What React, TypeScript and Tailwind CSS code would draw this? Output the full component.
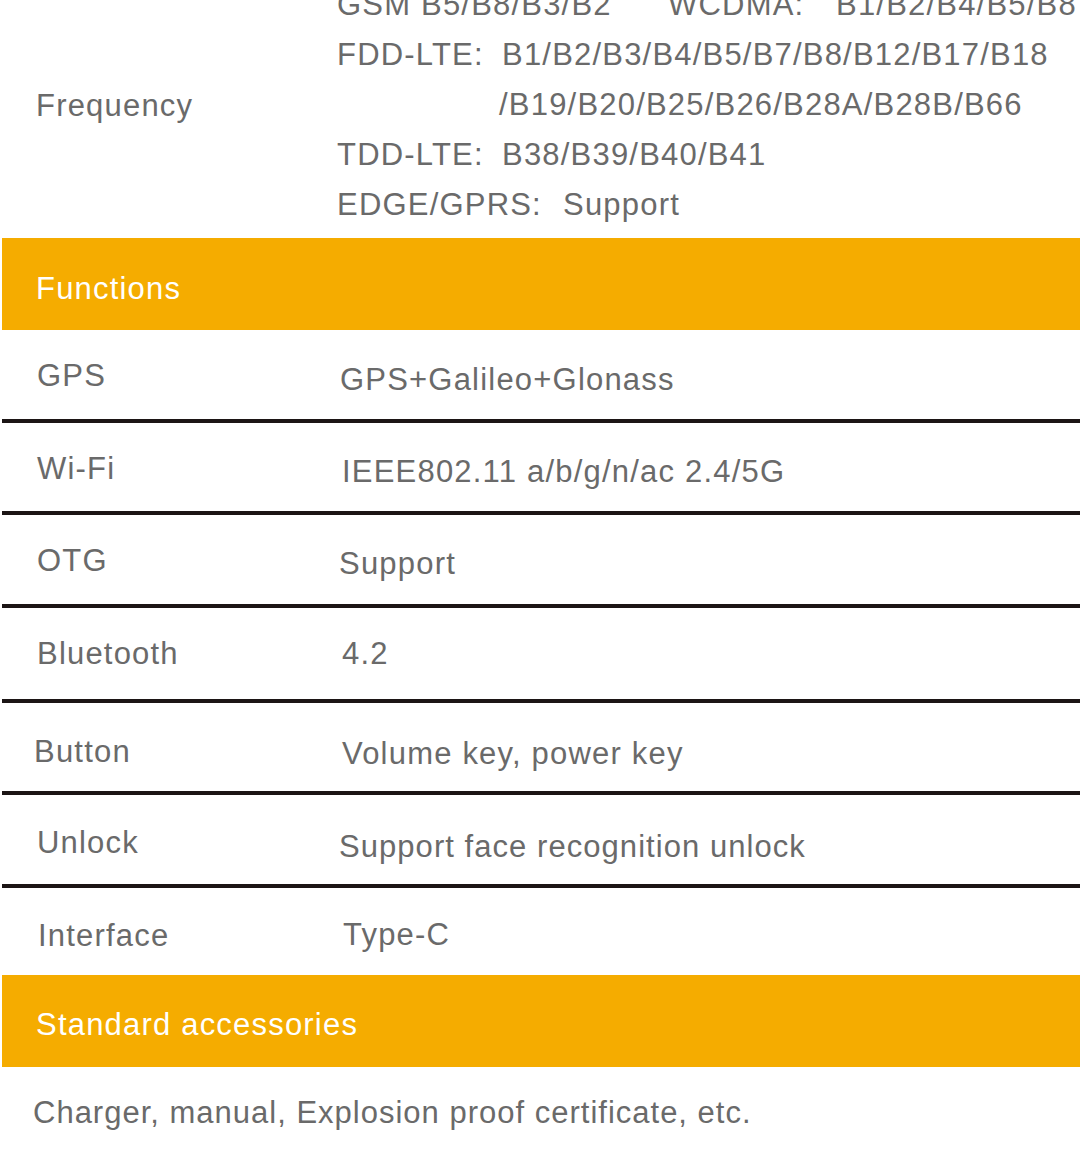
const font = { fontFamily: '"Liberation Sans", Arial, sans-serif' };

type Row = {
  label: string;
  value: string;
  h: string;
  line: boolean;
  labelCls: string;
  valueCls: string;
};

// spec rows under "Functions" (heights include the 4px rule at the bottom)
const rows: Row[] = [
  { label: "GPS", value: "GPS+Galileo+Glonass", h: "h-[93px]", line: true, labelCls: "pl-[35px] pt-[28px]", valueCls: "pl-[338px] pt-[32px]" },
  { label: "Wi-Fi", value: "IEEE802.11 a/b/g/n/ac 2.4/5G", h: "h-[92px]", line: true, labelCls: "pl-[35px] pt-[28px]", valueCls: "pl-[340px] pt-[31px]" },
  { label: "OTG", value: "Support", h: "h-[93px]", line: true, labelCls: "pl-[35px] pt-[28px]", valueCls: "pl-[337px] pt-[31px]" },
  { label: "Bluetooth", value: "4.2", h: "h-[95px]", line: true, labelCls: "pl-[35px] pt-[28px]", valueCls: "pl-[340px] pt-[28px]" },
  { label: "Button", value: "Volume key, power key", h: "h-[92px]", line: true, labelCls: "pl-[32px] pt-[31px]", valueCls: "pl-[340px] pt-[33px]" },
  { label: "Unlock", value: "Support face recognition unlock", h: "h-[93px]", line: true, labelCls: "pl-[35px] pt-[30px]", valueCls: "pl-[337px] pt-[34px] tracking-[1.05px]" },
  { label: "Interface", value: "Type-C", h: "h-[87px]", line: false, labelCls: "pl-[36px] pt-[30px]", valueCls: "pl-[341px] pt-[29px]" },
];

function SectionHeader({ title, pad }: { title: string; pad: string }) {
  return (
    <div className={`h-[92px] bg-[#f5ac00] pl-[34px] text-white ${pad}`}>
      {title}
    </div>
  );
}

export default function App() {
  return (
    <div
      className="w-[1080px] h-[1175px] overflow-hidden bg-white pl-[2px] text-[#6a6a6a] text-[31px] leading-[36px] tracking-[1.2px]"
      style={font}
    >
      {/* Frequency block, top line is cut off */}
      <div className="h-[238px] flex overflow-hidden">
        <div className="w-[335px] shrink-0 pl-[34px] pt-[88px]">Frequency</div>
        <div className="-mt-[20px] leading-[50px] whitespace-nowrap">
          <div className="flex">
            <span className="w-[331px]">GSM B5/B8/B3/B2</span>
            <span className="w-[168px]">WCDMA:</span>
            <span>B1/B2/B4/B5/B8</span>
          </div>
          <div className="flex">
            <span className="w-[165px]">FDD-LTE:</span>
            <span>B1/B2/B3/B4/B5/B7/B8/B12/B17/B18</span>
          </div>
          <div className="pl-[162px]">/B19/B20/B25/B26/B28A/B28B/B66</div>
          <div className="flex">
            <span className="w-[165px]">TDD-LTE:</span>
            <span>B38/B39/B40/B41</span>
          </div>
          <div className="flex">
            <span className="w-[226px]">EDGE/GPRS:</span>
            <span>Support</span>
          </div>
        </div>
      </div>

      <SectionHeader title="Functions" pad="pt-[33px]" />

      {rows.map((r) => (
        <div
          key={r.label}
          className={`${r.h} flex ${r.line ? "border-b-4 border-[#1c1515]" : ""}`}
        >
          <div className={`w-[335px] shrink-0 ${r.labelCls}`}>{r.label}</div>
          <div className={`-ml-[335px] whitespace-nowrap ${r.valueCls}`}>{r.value}</div>
        </div>
      ))}

      <SectionHeader title="Standard accessories" pad="pt-[32px]" />

      <div className="h-[108px] pl-[31px] pt-[28px] tracking-[1px]">
        Charger, manual, Explosion proof certificate, etc.
      </div>
    </div>
  );
}
